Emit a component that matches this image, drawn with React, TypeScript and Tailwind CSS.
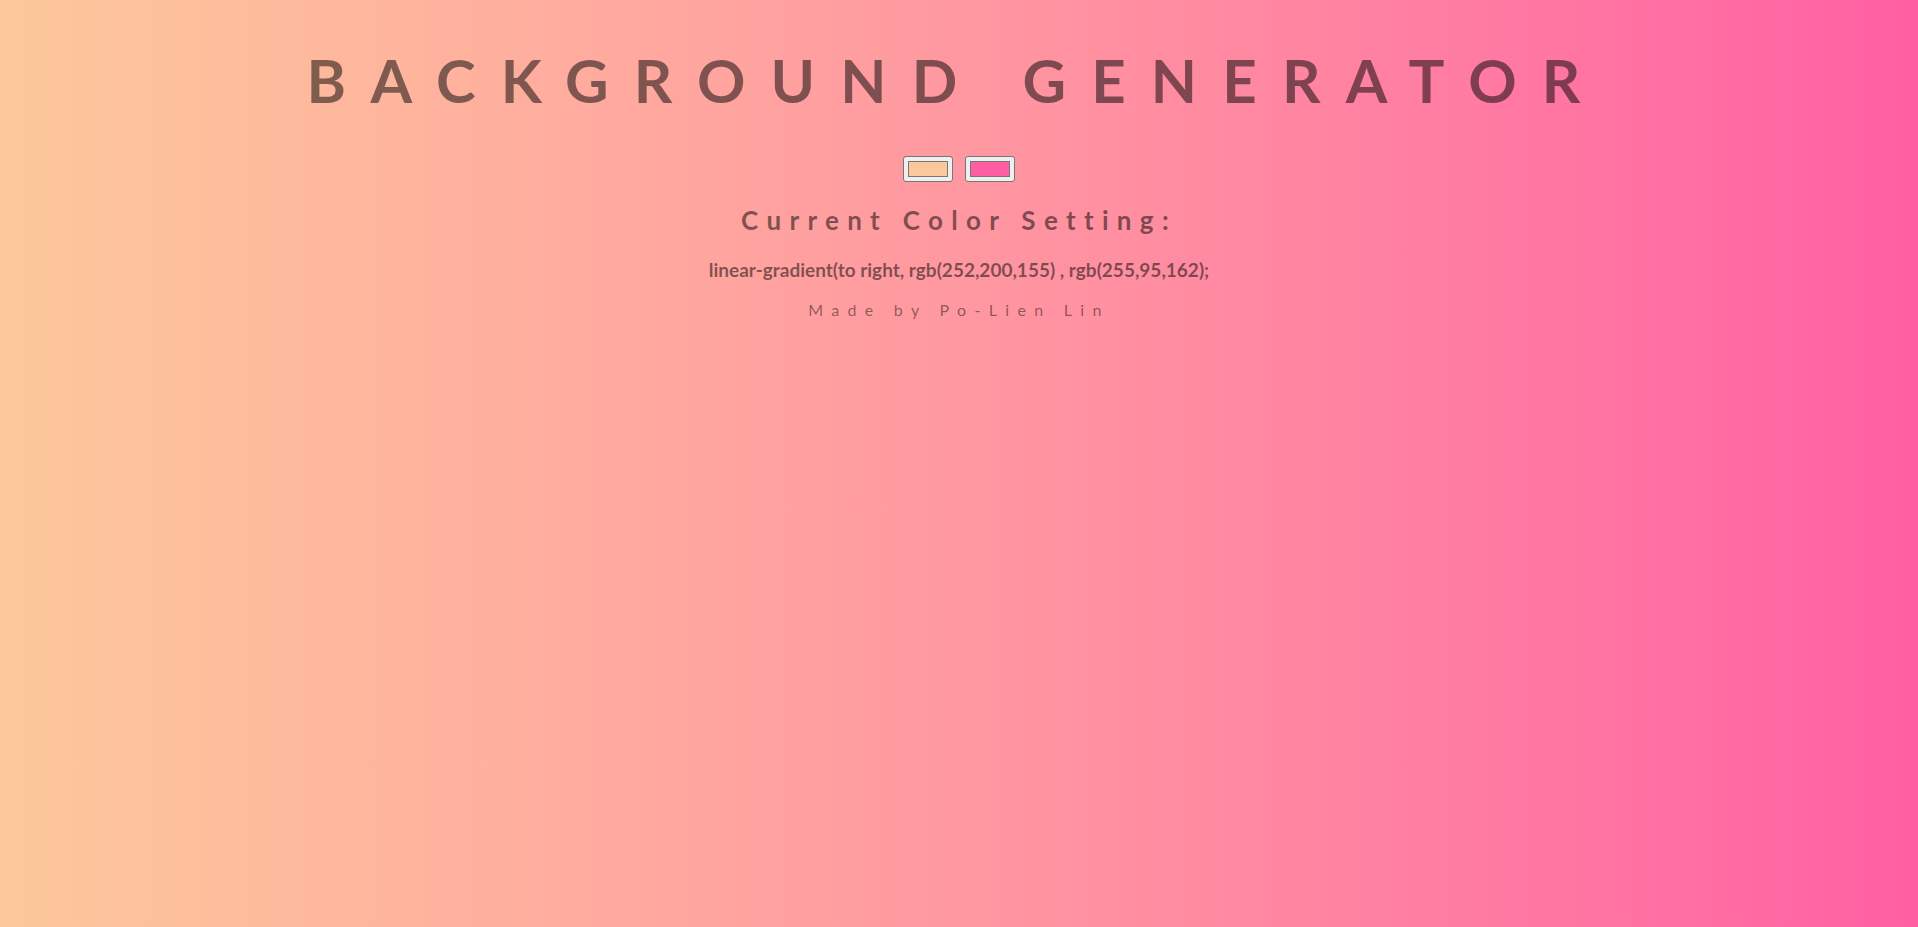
import React from 'react';

const left = 'rgb(252,200,155)';
const right = 'rgb(255,95,162)';

const Swatch = ({ color }: { color: string }) => (
  <div className="w-[50px] h-[26px] p-[4px] bg-[#efefef] border border-[#767676] rounded-[3px]">
    <div className="w-full h-full border border-[#777]" style={{ backgroundColor: color }} />
  </div>
);

const App: React.FC = () => {
  return (
    <div className="w-full h-[927px] bg-linear-to-r from-[rgb(252,200,155)] to-[rgb(255,95,162)] font-['Lato','Noto_Sans',sans-serif] text-black/50 flex flex-col items-center">
      <h1 className="mt-[38px] pr-[6px] text-[60px] leading-[84px] font-bold tracking-[0.42em]">
        BACKGROUND GENERATOR
      </h1>
      <div className="mt-[34px] flex gap-[12px]">
        <Swatch color={left} />
        <Swatch color={right} />
      </div>
      <h3 className="mt-[22px] text-[26px] leading-[32px] font-bold tracking-[0.32em]">
        Current Color Setting:
      </h3>
      <p className="mt-[22px] text-[19px] leading-[24px] font-bold">
        linear-gradient(to right, rgb(252,200,155) , rgb(255,95,162);
      </p>
      <p className="mt-[17px] text-[16px] leading-[22px] tracking-[0.52em] text-black/45">
        Made by Po-Lien Lin
      </p>
    </div>
  );
};

export default App;
